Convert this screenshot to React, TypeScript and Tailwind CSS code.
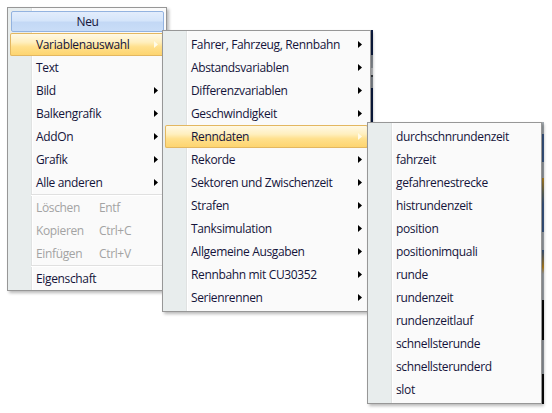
import React from "react";

type Entry =
  | { kind: "head"; label: string }
  | { kind: "sep" }
  | { kind: "item"; label: string; sub?: boolean; hot?: boolean; off?: boolean; keys?: string };

const main: Entry[] = [
  { kind: "head", label: "Neu" },
  { kind: "item", label: "Variablenauswahl", sub: true, hot: true },
  { kind: "item", label: "Text" },
  { kind: "item", label: "Bild", sub: true },
  { kind: "item", label: "Balkengrafik", sub: true },
  { kind: "item", label: "AddOn", sub: true },
  { kind: "item", label: "Grafik", sub: true },
  { kind: "item", label: "Alle anderen", sub: true },
  { kind: "sep" },
  { kind: "item", label: "Löschen", off: true, keys: "Entf" },
  { kind: "item", label: "Kopieren", off: true, keys: "Ctrl+C" },
  { kind: "item", label: "Einfügen", off: true, keys: "Ctrl+V" },
  { kind: "sep" },
  { kind: "item", label: "Eigenschaft" },
];

const groups: Entry[] = [
  "Fahrer, Fahrzeug, Rennbahn",
  "Abstandsvariablen",
  "Differenzvariablen",
  "Geschwindigkeit",
  "Renndaten",
  "Rekorde",
  "Sektoren und Zwischenzeit",
  "Strafen",
  "Tanksimulation",
  "Allgemeine Ausgaben",
  "Rennbahn mit CU30352",
  "Serienrennen",
].map((label) => ({ kind: "item" as const, label, sub: true, hot: label === "Renndaten" }));

const raceData: Entry[] = [
  "durchschnrundenzeit",
  "fahrzeit",
  "gefahrenestrecke",
  "histrundenzeit",
  "position",
  "positionimquali",
  "runde",
  "rundenzeit",
  "rundenzeitlauf",
  "schnellsterunde",
  "schnellsterunderd",
  "slot",
].map((label) => ({ kind: "item" as const, label }));

function Arrow({ light }: { light?: boolean }) {
  return (
    <svg width="4" height="7" viewBox="0 0 4 7" className="shrink-0">
      <polygon points="0,0 4,3.5 0,7" fill={light ? "#fffbe8" : "#000000"} />
    </svg>
  );
}

function Row({ entry }: { entry: Entry }) {
  if (entry.kind === "sep") {
    return (
      <div className="h-[2px] ml-[21px]">
        <div className="h-px bg-[#e0e0e0]" />
        <div className="h-px bg-white" />
      </div>
    );
  }
  if (entry.kind === "head") {
    return (
      <div className="h-[23px] pt-px pb-px pl-px">
        <div className="flex h-[21px] items-center justify-center rounded-[2px] border border-[#93b3e0] bg-[linear-gradient(to_bottom,#e3edfc_0%,#d5e5fa_45%,#c3d8f5_55%,#c9ddf7_100%)] text-[#14143a]">
          {entry.label}
        </div>
      </div>
    );
  }
  return (
    <div
      className={`flex h-[23px] items-center pl-[26px] pr-[6px] ${
        entry.hot
          ? "rounded-[2px] shadow-[inset_0_0_0_1px_#e3b760] bg-[linear-gradient(to_bottom,#fffaea_0%,#ffefbe_40%,#ffe08c_60%,#fdd36c_100%)]"
          : ""
      } ${entry.off ? "text-[#a3a3a3]" : "text-[#14143a]"}`}
    >
      <span className={entry.keys ? "w-[63px]" : "flex-1"}>{entry.label}</span>
      {entry.keys && <span className="flex-1">{entry.keys}</span>}
      {entry.sub && <Arrow light={entry.hot} />}
    </div>
  );
}

function Menu({ items, className }: { items: Entry[]; className: string }) {
  return (
    <div
      className={`absolute border border-[#979797] px-[2px] pt-[2px] shadow-[2px_2px_3px_rgba(0,0,0,0.28)] bg-[linear-gradient(to_right,#e8eded_0px,#e8eded_23px,#e0e2e2_23px,#e0e2e2_24px,#ffffff_24px,#ffffff_25px,#fafafa_25px)] ${className}`}
    >
      {items.map((e, i) => (
        <Row key={i} entry={e} />
      ))}
    </div>
  );
}

export default function App() {
  return (
    <div className="relative h-[413px] w-[552px] overflow-hidden bg-white text-[12px] font-[family-name:'Open_Sans','Noto_Sans',sans-serif] tracking-[-0.35px]">
      {/* bits of the window behind, seen through the menu shadows */}
      <div className="absolute left-[370px] top-[30px] h-[92px] w-[3px] bg-[linear-gradient(to_bottom,#0c1d45_0px,#0c1d45_25px,#8d949c_25px,#9aa0a6_38px,#c9cccf_38px,#c9cccf_45px,#3a3f46_45px,#3a3f46_47px,#8d949c_47px,#8d949c_58px,#0c1d45_58px)]" />
      <div className="absolute left-[541px] top-[122px] h-[282px] w-[3px] bg-[linear-gradient(to_bottom,#aab0b6_0px,#aab0b6_12px,#3d5c8c_12px,#3d5c8c_40px,#a0a6ac_40px,#a0a6ac_56px,#c08a20_56px,#6a7060_70px,#3d5c8c_82px,#3d5c8c_110px,#a8aeb4_110px,#a8aeb4_128px,#3d5c8c_128px,#c08a20_145px,#a8aeb4_152px,#a8aeb4_178px,#0a0a0a_178px,#0a0a0a_218px,#9ca2a8_218px,#9ca2a8_252px,#0a0a0a_252px)]" />

      <Menu items={main} className="left-[7px] top-[7px] w-[160px] h-[284px]" />
      <Menu items={groups} className="left-[162px] top-[30px] w-[209px] h-[282px]" />
      <Menu items={raceData} className="left-[367px] top-[122px] w-[175px] h-[282px]" />
    </div>
  );
}
